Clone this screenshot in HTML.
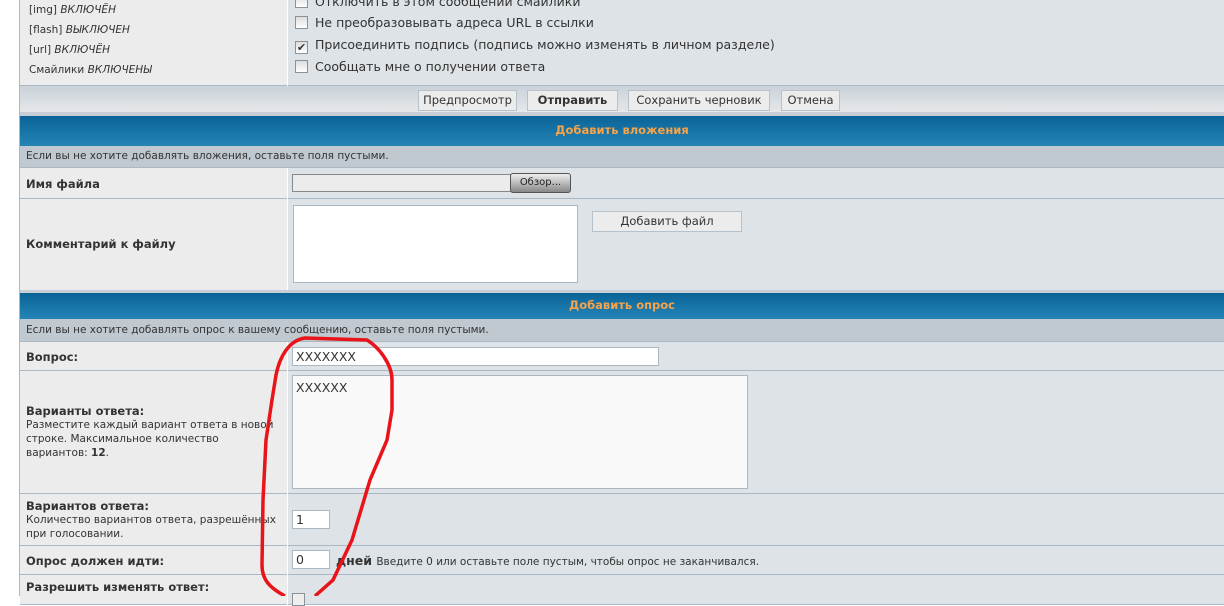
<!DOCTYPE html>
<html><head><meta charset="utf-8"><style>
*{margin:0;padding:0;box-sizing:border-box}
body{width:1224px;height:596px;overflow:hidden;background:#fff;font-family:"DejaVu Sans","Liberation Sans",sans-serif;color:#323d4f;position:relative}
.a{position:absolute}
.L{left:20px;width:267px;background:#ececec;border-bottom:1px solid #a9b8c2}
.R{left:288px;width:936px;background:#dee3e7;border-bottom:1px solid #a9b8c2}
.lbl{font-size:11.5px;font-weight:bold;color:#333}
.small{font-size:10.5px;color:#333;line-height:14px}
.hdr{left:20px;width:1204px;background:linear-gradient(#0a6397,#2585b6);border-top:3px solid #c8ced6;color:#f6a34a;font-size:11.5px;font-weight:bold;text-align:center}
.info{left:20px;width:1204px;background:#c0c8d0;border-bottom:1px solid #a9b8c2;font-size:10.5px;color:#333;padding-left:6px}
.btn{position:absolute;top:90px;height:21px;background:#ececec;border:1px solid #b7c1c9;font-size:11.5px;color:#333;text-align:center;line-height:19px}
.inp{position:absolute;background:#fff;border:1px solid #a9b8c2;font-size:12.5px;color:#333;padding-left:3px}
.cb{display:inline-block;width:13px;height:13px;border:1px solid #8a9299;background:linear-gradient(#ddd,#fff);vertical-align:-2px;margin-right:7px;font-size:11px;line-height:11px;text-align:center}
.opt{position:absolute;left:295px;font-size:12.5px;color:#333}
</style></head><body>
<div class="a" style="left:19px;top:0;width:1px;height:596px;background:#a9b8c2"></div>
<div class="a L" style="top:0;height:86px"></div>
<div class="a R" style="top:0;height:86px"></div>
<div class="a small" style="left:29px;top:0px;line-height:20px;font-size:10.5px">[img] <i>ВКЛЮЧЁН</i><br>[flash] <i>ВЫКЛЮЧЕН</i><br>[url] <i>ВКЛЮЧЁН</i><br>Смайлики <i>ВКЛЮЧЕНЫ</i></div>
<div class="opt" style="top:-6px"><span class="cb"></span>Отключить в этом сообщении смайлики</div>
<div class="opt" style="top:15px"><span class="cb"></span>Не преобразовывать адреса URL в ссылки</div>
<div class="opt" style="top:37px"><span class="cb">✔</span>Присоединить подпись (подпись можно изменять в личном разделе)</div>
<div class="opt" style="top:59px"><span class="cb"></span>Сообщать мне о получении ответа</div>
<div class="a" style="left:20px;top:86px;width:1204px;height:29px;background:linear-gradient(#c9d1d9,#e6e8ea);border-bottom:3px solid #c8ced6"></div>
<div class="btn" style="left:418px;width:99px">Предпросмотр</div>
<div class="btn" style="left:527px;width:91px;font-weight:bold">Отправить</div>
<div class="btn" style="left:628px;width:142px">Сохранить черновик</div>
<div class="btn" style="left:781px;width:59px">Отмена</div>
<div class="a hdr" style="top:113px;height:33px;line-height:29px">Добавить вложения</div>
<div class="a info" style="top:146px;height:22px;line-height:21px">Если вы не хотите добавлять вложения, оставьте поля пустыми.</div>
<div class="a L" style="top:168px;height:31px"></div><div class="a R" style="top:168px;height:31px"></div>
<div class="a lbl" style="left:26px;top:177px">Имя файла</div>
<div class="inp" style="left:292px;top:174px;width:220px;height:18px;background:#ececec;border-color:#888"></div>
<div class="a" style="left:510px;top:173px;width:61px;height:20px;border:1px solid #555;border-radius:3px;background:linear-gradient(#eee,#bbb 50%,#888);font-size:10px;text-align:center;line-height:18px;color:#222">Обзор...</div>
<div class="a L" style="top:199px;height:92px"></div><div class="a R" style="top:199px;height:92px"></div>
<div class="a lbl" style="left:26px;top:237px">Комментарий к файлу</div>
<div class="inp" style="left:293px;top:205px;width:285px;height:78px;background:#fff"></div>
<div class="btn" style="left:592px;top:211px;width:150px;height:21px">Добавить файл</div>
<div class="a hdr" style="top:290px;height:29px;line-height:25px">Добавить опрос</div>
<div class="a info" style="top:319px;height:23px;line-height:22px">Если вы не хотите добавлять опрос к вашему сообщению, оставьте поля пустыми.</div>
<div class="a L" style="top:342px;height:29px"></div><div class="a R" style="top:342px;height:29px"></div>
<div class="a lbl" style="left:26px;top:350px">Вопрос:</div>
<div class="inp" style="left:292px;top:347px;width:367px;height:19px;line-height:17px">XXXXXXX</div>
<div class="a L" style="top:371px;height:123px"></div><div class="a R" style="top:371px;height:123px"></div>
<div class="a" style="left:26px;top:404px"><div class="lbl">Варианты ответа:</div><div class="small" style="width:250px">Разместите каждый вариант ответа в новой строке. Максимальное количество вариантов: <b>12</b>.</div></div>
<div class="inp" style="left:292px;top:375px;width:456px;height:114px;background:#f9f9f9;padding:4px 3px">XXXXXX</div>
<div class="a L" style="top:494px;height:52px"></div><div class="a R" style="top:494px;height:52px"></div>
<div class="a" style="left:26px;top:499px"><div class="lbl">Вариантов ответа:</div><div class="small" style="width:262px">Количество вариантов ответа, разрешённых при голосовании.</div></div>
<div class="inp" style="left:292px;top:510px;width:38px;height:19px;line-height:17px">1</div>
<div class="a L" style="top:546px;height:29px"></div><div class="a R" style="top:546px;height:29px"></div>
<div class="a lbl" style="left:26px;top:554px">Опрос должен идти:</div>
<div class="inp" style="left:292px;top:550px;width:38px;height:19px;line-height:17px">0</div>
<div class="a" style="left:336px;top:553px;font-size:12.5px;font-weight:bold;color:#333">дней <span style="font-size:10.5px;font-weight:normal">Введите 0 или оставьте поле пустым, чтобы опрос не заканчивался.</span></div>
<div class="a L" style="top:575px;height:30px"></div><div class="a R" style="top:575px;height:30px"></div>
<div class="a lbl" style="left:26px;top:580px">Разрешить изменять ответ:</div>
<div class="a" style="left:292px;top:593px;width:13px;height:13px;border:1px solid #8a9299;background:#eee"></div>
<svg class="a" style="left:0;top:0" width="1224" height="596"><path d="M285 596 C270 588 262 580 262 565 L263 500 L266 440 L272 400 L276 375 C280 355 290 340 305 338 L367 340 C380 348 392 365 392 380 L392 410 L387 440 L370 480 L352 540 L333 580 L315 596" fill="none" stroke="#e8141a" stroke-width="3.5"/></svg>
</body></html>
